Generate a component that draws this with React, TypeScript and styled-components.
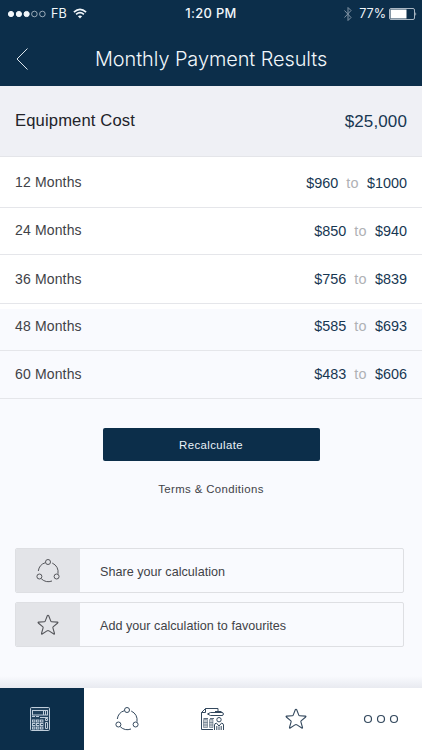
import React from "react";
import styled, { createGlobalStyle } from "styled-components";

const navy = "#0c2e4a";

const GlobalStyle = createGlobalStyle`
  * { box-sizing: border-box; }
  body { margin: 0; background: #f9fafe; }
  button { font: inherit; border: 0; padding: 0; margin: 0; background: none; color: inherit; }
`;

const Screen = styled.main`
  width: 422px;
  height: 750px;
  display: flex;
  flex-direction: column;
  overflow: hidden;
  background: #f9fafe;
  color: #414247;
  font-family: "Liberation Sans", Arial, sans-serif;
`;

const Header = styled.header`
  height: 86px;
  flex: none;
  background: ${navy};
  color: #f2f7fb;
`;

const StatusBar = styled.div`
  height: 27px;
  display: grid;
  grid-template-columns: 1fr auto 1fr;
  align-items: center;
  padding: 0 5px 0 8px;
  font: 500 12.9px/27px Inter, sans-serif;
`;

const StatusGroup = styled.div<{ $end?: boolean }>`
  display: flex;
  align-items: center;
  justify-content: ${(p) => (p.$end ? "flex-end" : "flex-start")};
  font-weight: 400;
  font-size: 12.6px;
`;

const Signal = styled.svg` margin-right: 5px; `;
const Wifi = styled.svg` margin-left: 6px; `;
const Bluetooth = styled.svg` margin-right: 7px; `;
const Battery = styled.svg` margin-left: 3px; `;
const Clock = styled.div`
  letter-spacing: 0.35px;
  margin-right: 3px;
`;

const TitleBar = styled.div`
  height: 59px;
  display: flex;
  align-items: center;
  padding: 0 0 0 15px;
`;

const Back = styled.button`
  width: 80px;
  height: 24px;
  margin-top: 5px;
  text-align: left;
`;

const Title = styled.h1`
  margin: 4px 0 0;
  font: 300 19.9px/26px Inter, sans-serif;
  letter-spacing: -0.06px;
  white-space: nowrap;
`;

const Cost = styled.section`
  height: 71px;
  flex: none;
  display: flex;
  justify-content: space-between;
  align-items: center;
  padding: 0 15px;
  background: #eff0f5;
  border-bottom: 1px solid #e4e5e9;
  color: #222329;
  font-size: 16.6px;
`;

const CostLabel = styled.span`
  letter-spacing: 0.14px;
  padding-bottom: 1px;
`;

const CostValue = styled.span`
  color: #173752;
  padding-top: 1px;
  font-size: 17px;
  letter-spacing: 0.12px;
`;

const Row = styled.div<{ $height: number; $tint?: "half" | "full"; $lift?: number }>`
  height: ${(p) => p.$height}px;
  flex: none;
  display: flex;
  align-items: center;
  justify-content: space-between;
  padding: 0 15px ${(p) => p.$lift ?? 0}px;
  border-bottom: 1px solid #e5e6ea;
  background: ${(p) =>
    p.$tint === "full" ? "#f9fafe" : p.$tint === "half" ? "linear-gradient(#fff 5px, #f9fafe 5px)" : "#fff"};
  font-size: 14px;
`;

const Term = styled.span`
  letter-spacing: 0.15px;
`;

const Range = styled.span`
  display: flex;
  gap: 8px;
  padding-top: 1px;
  color: #173752;
  font-size: 14.4px;
`;

const To = styled.span`
  color: #afb1b5;
  letter-spacing: 0.4px;
`;

const Actions = styled.section`
  display: flex;
  flex-direction: column;
  align-items: center;
  padding-top: 29px;
`;

const Recalculate = styled.button`
  width: 217px;
  height: 33px;
  border-radius: 2px;
  background: ${navy};
  color: #eaf2f8;
  font-size: 11.4px;
  letter-spacing: 0.4px;
`;

const Terms = styled.a`
  margin-top: 20px;
  font-size: 11.4px;
  line-height: 16px;
  letter-spacing: 0.38px;
`;

const Options = styled.section`
  display: grid;
  gap: 9px;
  padding: 51px 18px 0 15px;
`;

const Option = styled.button`
  height: 45px;
  display: flex;
  border: 1px solid #dedfe3;
  border-radius: 2px;
  overflow: hidden;
  text-align: left;
`;

const OptionIcon = styled.span`
  width: 64px;
  height: 43px;
  display: grid;
  place-items: center;
  background: #e3e4e8;
  color: #55565b;
`;

const OptionLabel = styled.span`
  padding: 2px 0 0 20px;
  align-self: center;
  font-size: 12.6px;
  letter-spacing: 0.02px;
`;

const TabShade = styled.div`
  height: 12px;
  margin-top: auto;
  background: linear-gradient(#f9fafe, #e8eaf0);
`;

const Tabs = styled.nav`
  height: 62px;
  flex: none;
  display: grid;
  grid-template-columns: 84px 85px 84px 85px 84px;
  background: #fff;
  color: #34495e;
`;

const Tab = styled.button<{ $active?: boolean; $shift?: number }>`
  display: grid;
  place-items: center;
  background: ${(p) => (p.$active ? navy : "#fff")};
  color: ${(p) => (p.$active ? "#c0cedb" : "inherit")};
  padding-right: ${(p) => (p.$active ? 4 : 0)}px;
  padding-left: ${(p) => p.$shift ?? 0}px;
`;

const ShareIcon = () => (
  <svg width="26" height="26" viewBox="0 0 26 26" fill="none" stroke="currentColor" strokeWidth="1">
    <circle cx="13" cy="4" r="2.5" />
    <circle cx="4.4" cy="18.5" r="2.5" />
    <circle cx="21.6" cy="18.5" r="2.5" />
    <path d="M10.3 4.7A10.2 10.2 0 0 0 3.3 13M17.2 5A10.6 10.6 0 0 1 23 15.8M6.3 20.8A10.5 10.5 0 0 0 17 23" />
  </svg>
);

const StarIcon = () => (
  <svg width="24" height="24" viewBox="0 0 24 24" fill="none" stroke="currentColor" strokeWidth="1.1" strokeLinejoin="round">
    <path d="M12 2.2q.5 0 .7.6l2.1 5.3q.2.6.8.6l5.8.4q.9.2.3.9l-4.6 3.9q-.4.4-.2 1l1.6 5.6q.1.9-.7.5L13 17.9q-1-.6-2 0L6.2 21q-.8.4-.7-.5l1.6-5.6q.2-.6-.2-1L2.3 10q-.6-.7.3-.9l5.8-.4q.6 0 .8-.6l2.1-5.3q.2-.6.7-.6Z" />
  </svg>
);

const CalculatorIcon = () => (
  <svg width="22" height="26" viewBox="0 0 22 26" fill="none" stroke="currentColor">
    <rect x="1.5" y="1.5" width="19" height="23" rx="1" fill="currentColor" fillOpacity=".12" />
    <rect x="3.5" y="4.5" width="15" height="4.5" />
    <path d="M14.5 5v4M16.5 5v4M3 10.5h3M7 10.5h3M11 11.5h8" />
    {[15, 18.5, 22].map((y) =>
      [4, 8, 12].map((x) => <rect key={`${x}-${y}`} x={x - 0.5} y={y - 1} width="2.4" height="2" strokeWidth="1" />),
    )}
    <path d="M16.5 12.5h2v2h-2zM16.5 16.5h2v6h-2z" />
  </svg>
);

const ReportIcon = () => (
  <svg width="26" height="26" viewBox="0 0 26 26" fill="none" stroke="currentColor">
    <path d="M19 5V2.5H6.5l-4 4v17h11.5M6.5 2.5v4h-4" />
    <path d="M8.5 8l3-1.5h11.5q1.4 0 1.4 1.5T23 9.5H11.5zM16 5.5h6.5" />
    <path d="M4.5 12.5h4.5M11 12.5h4" strokeOpacity=".8" />
    <path d="M4.5 13.5h4v8h-4zM10.5 13.5h3.5v8h-3.5z" fill="currentColor" fillOpacity=".3" strokeOpacity=".45" />
    <path d="M4.5 16.5h4M4.5 19h4M10.5 16.5H14M10.5 19H14" strokeOpacity=".45" />
    <circle cx="20" cy="13.7" r="2.2" fill="#fff" />
    <path d="M15.5 24v-5q0-1.6 2-1.9l2.5 3 2.5-3q2 .3 2 1.9v5M17.8 20v4M22.2 20v4M20 20.5V24" />
  </svg>
);

const MoreIcon = () => (
  <svg width="36" height="10" viewBox="0 0 36 10" fill="none" stroke="currentColor" strokeWidth="1.2">
    <circle cx="5" cy="5" r="3.5" />
    <circle cx="18" cy="5" r="3.5" />
    <circle cx="31" cy="5" r="3.5" />
  </svg>
);

type Payment = { months: number; low: string; high: string; height: number; tint?: "half" | "full"; lift?: number };

const payments: Payment[] = [
  { months: 12, low: "$960", high: "$1000", height: 51 },
  { months: 24, low: "$850", high: "$940", height: 47, lift: 2 },
  { months: 36, low: "$756", high: "$839", height: 49, lift: 1 },
  { months: 48, low: "$585", high: "$693", height: 47, tint: "half", lift: 3 },
  { months: 60, low: "$483", high: "$606", height: 48, tint: "full", lift: 2 },
];

export default function App() {
  return (
    <>
      <GlobalStyle />
      <Screen>
        <Header>
          <StatusBar>
            <StatusGroup>
              <Signal width="38" height="8" viewBox="0 0 38 8" fill="currentColor" stroke="currentColor">
                <circle cx="3" cy="4" r="2.6" />
                <circle cx="10.9" cy="4" r="2.6" />
                <circle cx="18.6" cy="4" r="2.6" />
                <circle cx="26.4" cy="4" r="2.8" fill="none" strokeWidth=".6" />
                <circle cx="34.4" cy="4" r="2.8" fill="none" strokeWidth=".6" />
              </Signal>
              FB
              <Wifi width="14" height="11" viewBox="0 0 14 11" fill="none" stroke="currentColor" strokeWidth="1.7">
                <path d="M.9 4.1q6.1-5.6 12.2 0M3.1 6.4q3.9-3.4 7.8 0" />
                <path d="M4.9 8.3q2.1-1.6 4.2 0L7 10.5z" fill="currentColor" stroke="none" />
              </Wifi>
            </StatusGroup>
            <Clock>1:20 PM</Clock>
            <StatusGroup $end>
              <Bluetooth width="8" height="14" viewBox="0 0 8 14" fill="none" stroke="#8294a5" strokeWidth="1">
                <path d="M.5 3.5l6.5 7-3 3V.5l3 3-6.5 7" />
              </Bluetooth>
              77%
              <Battery width="28" height="12" viewBox="0 0 28 12">
                <rect x=".5" y=".5" width="25" height="11" rx="1.5" fill="none" stroke="#aab7c3" />
                <path d="M1.5 1.5H17.5v9H1.5z" fill="#fff" />
                <path d="M26.5 4q1.5 2 0 4z" fill="#dce3e9" />
              </Battery>
            </StatusGroup>
          </StatusBar>
          <TitleBar>
            <Back aria-label="Back">
              <svg width="14" height="24" viewBox="0 0 14 24" fill="none" stroke="#dce5ec" strokeWidth="1">
                <path d="M12.5 1.5L2 12l10.5 10.5" />
              </svg>
            </Back>
            <Title>Monthly Payment Results</Title>
          </TitleBar>
        </Header>

        <Cost>
          <CostLabel>Equipment Cost</CostLabel>
          <CostValue>$25,000</CostValue>
        </Cost>

        {payments.map((p) => (
          <Row key={p.months} $height={p.height} $tint={p.tint} $lift={p.lift}>
            <Term>{p.months} Months</Term>
            <Range>
              <span>{p.low}</span>
              <To>to</To>
              <span>{p.high}</span>
            </Range>
          </Row>
        ))}

        <Actions>
          <Recalculate>Recalculate</Recalculate>
          <Terms>Terms &amp; Conditions</Terms>
        </Actions>

        <Options>
          <Option>
            <OptionIcon><ShareIcon /></OptionIcon>
            <OptionLabel>Share your calculation</OptionLabel>
          </Option>
          <Option>
            <OptionIcon><StarIcon /></OptionIcon>
            <OptionLabel>Add your calculation to favourites</OptionLabel>
          </Option>
        </Options>

        <TabShade />
        <Tabs>
          <Tab $active aria-label="Calculator"><CalculatorIcon /></Tab>
          <Tab aria-label="Share"><ShareIcon /></Tab>
          <Tab $shift={2} aria-label="Reports"><ReportIcon /></Tab>
          <Tab aria-label="Favourites"><StarIcon /></Tab>
          <Tab $shift={2} aria-label="More"><MoreIcon /></Tab>
        </Tabs>
      </Screen>
    </>
  );
}
